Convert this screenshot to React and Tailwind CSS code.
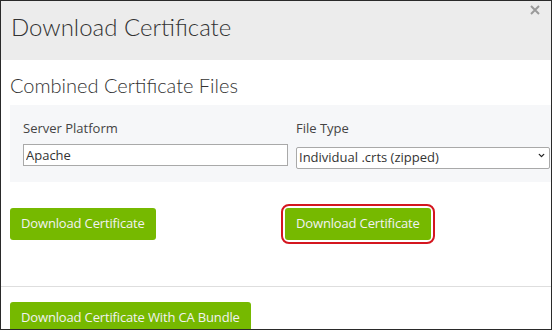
import { ChevronDown } from "lucide-react";

const btn =
  "h-[32px] rounded-[3px] bg-[#76b900] px-[11px] text-[13px] tracking-[-0.15px] text-[#f2f2f2] whitespace-nowrap";

export default function App() {
  return (
    <div
      className="relative h-[330px] w-[552px] overflow-hidden border border-[#2a2a2a] bg-white text-[#333]"
      style={{ fontFamily: '"Open Sans", sans-serif' }}
    >
      {/* HEADER */}
      <div className="h-[59px] bg-[#ececec] px-[10px] pt-[10px]">
        <h1
          className="text-[24px] leading-[32px] font-light text-[#333]"
          style={{ fontFamily: "Lato, sans-serif" }}
        >
          Download Certificate
        </h1>
      </div>
      <button className="absolute right-[11px] top-[4px] text-[#9a9a9a]">
        <svg width="10" height="10" viewBox="0 0 10 10">
          <path d="M1 1L9 9M9 1L1 9" stroke="currentColor" strokeWidth="2" />
        </svg>
      </button>

      {/* BODY */}
      <div className="pl-[9px] pt-[11px]">
        <h2
          className="text-[20px] leading-[28px] font-light text-[#333]"
          style={{ fontFamily: "Lato, sans-serif" }}
        >
          Combined Certificate Files
        </h2>

        <div className="mt-[6px] grid w-[560px] grid-cols-[265px_265px] gap-x-[8px] bg-[#f6f7f9] px-[13px] pb-[13px] pt-[14px]">
          <label className="text-[13px] leading-[18px] text-[#444]">Server Platform</label>
          <label className="text-[13px] leading-[18px] text-[#444]">File Type</label>
          <input
            readOnly
            value="Apache"
            className="mt-[7px] h-[22px] border border-[#a9a9a9] bg-white px-[2px] text-[13px] text-[#333]"
          />
          <div className="relative mt-[7px]">
            <select className="h-[22px] w-[254px] appearance-none rounded-[2px] border border-[#a9a9a9] bg-white pl-[2px] text-[13px] text-[#333]">
              <option>Individual .crts (zipped)</option>
            </select>
            <ChevronDown
              className="pointer-events-none absolute left-[241px] top-[7px] h-[9px] w-[9px] text-[#222]"
              strokeWidth={3.5}
            />
          </div>
        </div>

        <div className="flex h-[104px] items-start pt-[26px]">
          <div className="w-[271px]">
            <button className={btn}>Download Certificate</button>
          </div>
          <div className="-mt-[4px] rounded-[8px] border-2 border-[#d4161f] p-[2px]">
            <button className={btn}>Download Certificate</button>
          </div>
        </div>
      </div>

      {/* FOOTER */}
      <div className="border-t border-[#dedede] px-[9px] pt-[15px]">
        <button className={btn}>Download Certificate With CA Bundle</button>
      </div>
    </div>
  );
}
